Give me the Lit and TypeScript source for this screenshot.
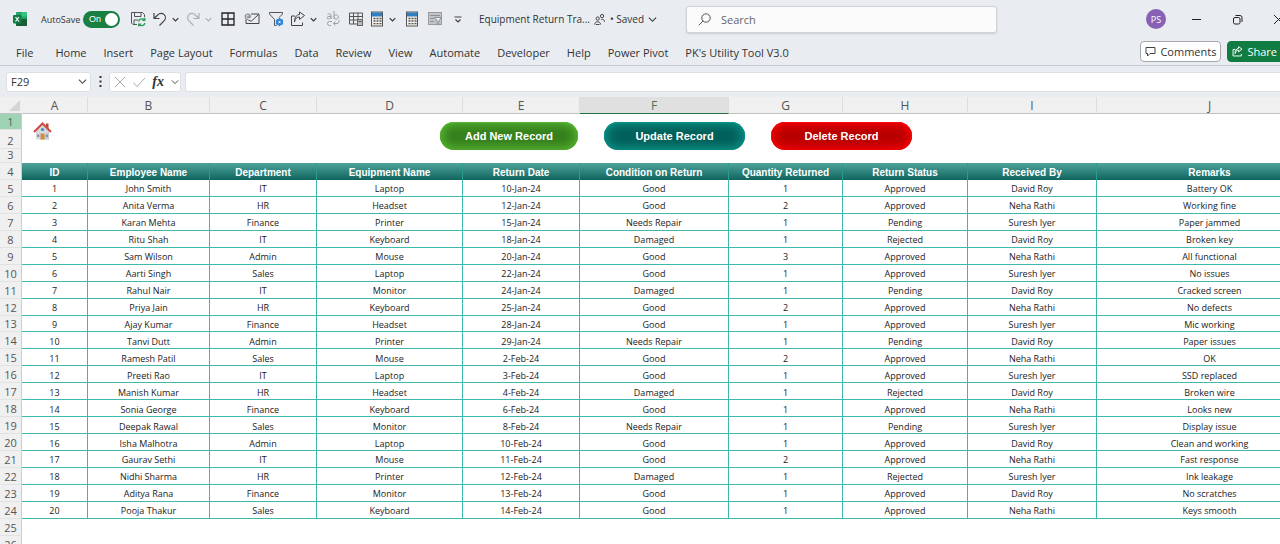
import { LitElement, html, css, svg, nothing } from "lit";
import { customElement, state } from "lit/decorators.js";
import { classMap } from "lit/directives/class-map.js";

const TABS = [
  "File", "Home", "Insert", "Page Layout", "Formulas", "Data", "Review", "View",
  "Automate", "Developer", "Help", "Power Pivot", "PK's Utility Tool V3.0",
];

const LETTERS = ["A", "B", "C", "D", "E", "F", "G", "H", "I", "J"];

const FIELDS = [
  "ID", "Employee Name", "Department", "Equipment Name", "Return Date",
  "Condition on Return", "Quantity Returned", "Return Status", "Received By", "Remarks",
];

const RECORDS = `1|John Smith|IT|Laptop|10-Jan-24|Good|1|Approved|David Roy|Battery OK
2|Anita Verma|HR|Headset|12-Jan-24|Good|2|Approved|Neha Rathi|Working fine
3|Karan Mehta|Finance|Printer|15-Jan-24|Needs Repair|1|Pending|Suresh Iyer|Paper jammed
4|Ritu Shah|IT|Keyboard|18-Jan-24|Damaged|1|Rejected|David Roy|Broken key
5|Sam Wilson|Admin|Mouse|20-Jan-24|Good|3|Approved|Neha Rathi|All functional
6|Aarti Singh|Sales|Laptop|22-Jan-24|Good|1|Approved|Suresh Iyer|No issues
7|Rahul Nair|IT|Monitor|24-Jan-24|Damaged|1|Pending|David Roy|Cracked screen
8|Priya Jain|HR|Keyboard|25-Jan-24|Good|2|Approved|Neha Rathi|No defects
9|Ajay Kumar|Finance|Headset|28-Jan-24|Good|1|Approved|Suresh Iyer|Mic working
10|Tanvi Dutt|Admin|Printer|29-Jan-24|Needs Repair|1|Pending|David Roy|Paper issues
11|Ramesh Patil|Sales|Mouse|2-Feb-24|Good|2|Approved|Neha Rathi|OK
12|Preeti Rao|IT|Laptop|3-Feb-24|Good|1|Approved|Suresh Iyer|SSD replaced
13|Manish Kumar|HR|Headset|4-Feb-24|Damaged|1|Rejected|David Roy|Broken wire
14|Sonia George|Finance|Keyboard|6-Feb-24|Good|1|Approved|Neha Rathi|Looks new
15|Deepak Rawal|Sales|Monitor|8-Feb-24|Needs Repair|1|Pending|Suresh Iyer|Display issue
16|Isha Malhotra|Admin|Laptop|10-Feb-24|Good|1|Approved|David Roy|Clean and working
17|Gaurav Sethi|IT|Mouse|11-Feb-24|Good|2|Approved|Neha Rathi|Fast response
18|Nidhi Sharma|HR|Printer|12-Feb-24|Damaged|1|Rejected|Suresh Iyer|Ink leakage
19|Aditya Rana|Finance|Monitor|13-Feb-24|Good|1|Approved|David Roy|No scratches
20|Pooja Thakur|Sales|Keyboard|14-Feb-24|Good|1|Approved|Neha Rathi|Keys smooth`
  .split("\n")
  .map((line) => line.split("|"));

const calculator = svg`
  <rect x="2.5" y="1" width="11" height="14" fill="#f4f1ea" stroke="#555"/>
  <rect x="3" y="1.5" width="10" height="4" fill="#2f7fc4"/>
  <path d="M4.500 7.500h2M7.500 7.500h2M10.500 7.500h2M4.500 10h2M7.500 10h2M10.500 10h2M4.500 12.700h2M7.500 12.700h2M10.500 12.700h2" stroke="#555" stroke-width="1.3"/>`;

const ICONS: Record<string, unknown> = {
  save: svg`<path d="M14.5 6V3.500L12.500 1.500H1.500v10.500l1.500 1.500h4M4.500 1.500v4h6.500v-4M4 13V9h4" stroke="#555"/>
    <path d="M8.500 10.500a3.500 3.500 0 0 1 6-1.500M14.800 6.800v2.500h-2.500M15 12a3.500 3.500 0 0 1-6 1.500M8.700 15.500v-2.400h2.400" stroke="#2f9e58" stroke-width="1.300"/>`,
  undo: svg`<path d="M2 2v5.500h5.500M2.300 7.200L6 3.700a4.300 4.300 0 0 1 6.200 6L7.500 14.500" stroke="#444" stroke-width="1.200"/>`,
  redo: svg`<path d="M14 2v5.500H8.500M13.700 7.200L10 3.700a4.300 4.300 0 0 0-6.200 6l4.700 4.800" stroke="#aab0b5" stroke-width="1.200"/>`,
  grid: svg`<path d="M2 2h12v12H2zM8 2v12M2 8h12" stroke="#222" stroke-width="1.300"/>`,
  mail: svg`<path d="M7 3h8v9.500H2V8.500M4.500 9.500L7.500 10l7-6.500" stroke="#444"/>
    <path d="M6.500 5.500a2.700 2.700 0 1 0-2 2.800M5 4.300v1.700c0 1 1.500 1 1.500-.500M5 5.500a1 1 0 1 1-1.500-.800" stroke="#555" stroke-width=".8"/>`,
  filter: svg`<path d="M6.500 14.500V8.500L1.500 3V1.500h13V3L11 6.500M6.500 14.500h2" stroke="#555"/>
    <circle cx="11.500" cy="11" r="2.600" stroke="#2f87d8" stroke-width="2"/>
    <path d="M11.500 6.800v8.400M7.900 8.900l7.200 4.200M7.900 13.100l7.200-4.200" stroke="#2f87d8" stroke-width="1.200"/><circle cx="11.500" cy="11" r="1.100" fill="#e9edf1"/>`,
  share: svg`<path d="M5 5H1.500v9.500h11v-3M4.500 11c.5-3.500 2.500-5 5-5V8.500L14.500 4.500 9.500 1v2.500C6 3.800 4.500 7 4.500 11z" stroke="#444"/>`,
  wrap: svg`<path d="M2.500 3.500c1-1 3.500-1 3.500.800V8M6 5.200c-5 0-4.500 2.600-2.500 2.600 1.500 0 2.500-1 2.500-2.600M9 0v8M9 5.500a2.200 2.200 0 1 1 0 1M7 10.500H4.500a2 2 0 0 0 0 4H6M14 9v1.500a2 2 0 0 1-2 2H8.500M10.500 10.500l-2 2 2 2" stroke="#9a9fa4"/>`,
  table: svg`<path d="M10 13H1.500V2h13v5.500M1.500 5.500h13M1.500 9h8M5.500 2v11M10 2v6" stroke="#555"/>
    <rect x="9.500" y="8.500" width="5" height="6" fill="#bbb" stroke="#666"/><path d="M10.500 10.500h3" stroke="#555"/>`,
  calc: calculator,
  funnel: svg`<rect x="1.500" y="1.500" width="13" height="12" fill="#c3c6c9" stroke="#999"/><path d="M3 4.500h10M3 7.500h4M3 10.500h4" stroke="#8d9093"/>
    <path d="M7.500 6.500h7l-2.700 3.500v4l-1.600-1v-3z" fill="#e9edf1" stroke="#8d9093"/>`,
  more: svg`<path d="M4.500 6h7M5.500 8.500L8 11 10.500 8.500" stroke="#444" stroke-width="1.200"/>`,
};

const icon = (name: string) =>
  html`<svg class="icon" viewBox="0 0 16 16" fill="none" aria-hidden="true">${ICONS[name]}</svg>`;

const chevron = html`<svg class="chevron" viewBox="0 0 10 10" fill="none" stroke="currentColor" aria-hidden="true">
  <path d="M1 3l4 4 4-4" /></svg>`;

@customElement("app-titlebar")
class AppTitlebar extends LitElement {
  static styles = css`
    :host { display: block; overflow: hidden; color: #333; font-family: "Open Sans", "Noto Sans", sans-serif; }
    .bar { display: grid; grid-template-columns: 686px minmax(120px, 311px) 1fr; align-items: center; height: 38px; }
    .left { display: flex; align-items: center; min-width: 0; height: 38px; }
    .logo { width: 14px; height: 14px; margin: 0 14px 0 13px; flex: none; }
    .autosave { display: flex; align-items: center; width: 85px; font-size: 9px; white-space: nowrap; }
    .autosave span { width: 42px; }
    .toggle { appearance: none; position: relative; width: 37px; height: 17px; margin: 0; border-radius: 9px; background: #1a7f43; flex: none; }
    .toggle::before { content: "On"; position: absolute; left: 6px; top: 2px; color: #fff; font-size: 9px; line-height: 13px; }
    .toggle::after { content: ""; position: absolute; right: 2px; top: 2px; width: 13px; height: 13px; border-radius: 50%; background: #fff; }
    button { display: flex; align-items: center; justify-content: center; padding: 0; border: 0; background: none; color: #333; font: inherit; flex: none; }
    .tool { width: 24px; height: 24px; }
    .narrow { width: 23px; }
    .split { display: flex; margin-right: 3px; }
    .split .tool { width: 20px; }
    .drop { width: 10px; }
    .dim { color: #aab0b5; }
    .icon { width: 16px; height: 16px; }
    .chevron { width: 7px; height: 7px; stroke-width: 1.6; }
    .doc { display: flex; align-items: center; margin-left: 10px; font-size: 10px; white-space: nowrap; }
    .people { width: 11px; height: 11px; margin: 0 5px 0 4px; }
    .saved { gap: 4px; }
    .saved .chevron { width: 9px; height: 9px; stroke-width: 1.2; }
    .search { display: flex; align-items: center; gap: 10px; height: 27px; box-sizing: border-box; padding: 0 11px;
      border: 1px solid #d0d3d6; border-radius: 3px; background: #fbfbfb; box-shadow: 0 1px 2px #0002; }
    .search svg { width: 13px; height: 13px; flex: none; }
    .search input { flex: 1; min-width: 0; padding: 0; border: 0; outline: 0; background: none; color: #333; font: 11px "Open Sans", sans-serif; }
    .search input::placeholder { color: #666; opacity: 1; }
    .window { display: flex; align-items: center; justify-content: flex-end; margin-right: -4px; }
    .avatar { width: 20px; height: 20px; margin-right: 25px; border-radius: 50%; background: #8661b5; color: #fff; font-size: 9px; }
    .win { width: 11px; height: 20px; margin-right: 30px; }
    .win svg { width: 11px; height: 11px; }
    .win:last-child { margin-right: 0; }
  `;

  private tool(name: string, label: string, extra = "") {
    return html`<button class="tool ${extra}" aria-label=${label}>${icon(name)}</button>`;
  }

  private split(name: string, label: string, dim = false) {
    return html`<div class="split">
      ${this.tool(name, label)}
      <button class=${classMap({ drop: true, dim })} aria-label="${label} options">${chevron}</button>
    </div>`;
  }

  render() {
    return html`<header class="bar">
      <div class="left">
        <svg class="logo" viewBox="0 0 14 14" aria-hidden="true">
          <rect x="3" width="11" height="14" rx="1" fill="#21a366" />
          <path d="M8.500 0H13a1 1 0 0 1 1 1v3.500H8.500z" fill="#33c481" />
          <path d="M3 7h11v6a1 1 0 0 1-1 1H4a1 1 0 0 1-1-1z" fill="#185c37" />
          <rect y="3" width="8.500" height="8.500" rx="1" fill="#107c41" />
          <path d="M2.500 5l3.500 4.500M6 5L2.500 9.500" stroke="#fff" stroke-width="1.200" />
        </svg>
        <label class="autosave"><span>AutoSave</span><input class="toggle" type="checkbox" role="switch" checked /></label>
        ${this.tool("save", "Save")}
        ${this.split("undo", "Undo")}
        ${this.split("redo", "Redo", true)}
        ${this.tool("grid", "Borders")}
        ${this.tool("mail", "Email")}
        ${this.tool("filter", "Filter settings")}
        ${this.split("share", "Export")}
        ${this.tool("wrap", "Wrap text", "narrow")}
        ${this.tool("table", "Pivot table", "narrow")}
        ${this.split("calc", "Calculate")}
        ${this.tool("calc", "Calculate sheet", "narrow")}
        ${this.tool("funnel", "Slicer", "narrow")}
        ${this.tool("more", "Customize toolbar", "narrow")}
        <div class="doc">
          <span>Equipment Return Tra...</span>
          <svg class="people" viewBox="0 0 12 12" fill="none" stroke="#333" aria-hidden="true">
            <circle cx="4" cy="5" r="1.800" /><path d="M.8 11.500c0-4 6.400-4 6.400 0M2 11.500h4" />
            <circle cx="8.800" cy="2.300" r="1.800" /><path d="M8 6c2-.500 3.500.5 3.500 2.500" />
          </svg>
          <button class="saved"><span>• Saved</span>${chevron}</button>
        </div>
      </div>
      <label class="search">
        <svg viewBox="0 0 13 13" fill="none" stroke="#555" aria-hidden="true"><circle cx="8" cy="5" r="4.200" /><path d="M5 8L.8 12.200" /></svg>
        <input type="search" placeholder="Search" aria-label="Search" />
      </label>
      <div class="window">
        <button class="avatar" aria-label="Account">PS</button>
        <button class="win" aria-label="Minimize"><svg viewBox="0 0 11 11"><path d="M1 5.500h9" stroke="#222" /></svg></button>
        <button class="win" aria-label="Restore"><svg viewBox="0 0 11 11" fill="none" stroke="#222"><rect x="1.500" y="3.500" width="6.500" height="6.500" rx="1.500" /><path d="M3.500 1.500H8a2 2 0 0 1 2 2V8" /></svg></button>
        <button class="win" aria-label="Close"><svg viewBox="0 0 11 11"><path d="M1 1l9 9M10 1l-9 9" stroke="#222" /></svg></button>
      </div>
    </header>`;
  }
}

@customElement("app-ribbon")
class AppRibbon extends LitElement {
  static styles = css`
    :host { display: block; overflow: hidden; font-family: "Open Sans", "Noto Sans", sans-serif; }
    .ribbon { display: flex; align-items: center; height: 27px; border-bottom: 1px solid #c4cacf; box-shadow: 0 1px 2px #0001; }
    .tabs { display: flex; gap: 17px; padding: 2px 0 0 16px; white-space: nowrap; }
    .tab { color: #333; font-size: 11px; line-height: 16px; text-decoration: none; }
    .tab:first-child { margin-right: 5px; }
    .actions { display: flex; gap: 6px; margin: 0 -16px 0 auto; }
    .action { display: flex; align-items: center; gap: 4px; height: 21px; box-sizing: border-box; padding: 0 4px;
      border: 1px solid #a5a9ad; border-radius: 4px; background: #fff; color: #333; font: 11px "Open Sans", sans-serif; white-space: nowrap; }
    .action svg { width: 11px; height: 11px; }
    .primary { padding-right: 18px; border-color: #107c41; background: #107c41; color: #fff; }
  `;

  render() {
    return html`<div class="ribbon">
      <nav class="tabs" aria-label="Ribbon">${TABS.map((tab) => html`<a class="tab" href="#">${tab}</a>`)}</nav>
      <div class="actions">
        <button class="action">
          <svg viewBox="0 0 11 11" fill="none" stroke="#444" aria-hidden="true"><path d="M1 1.500h9v6H5L2.500 10V7.500H1z" /></svg>Comments
        </button>
        <button class="action primary">
          <svg viewBox="0 0 16 16" fill="none" stroke="#fff" stroke-width="1.400" aria-hidden="true"><path d="M5 5H1.500v9.500h12v-3M4.500 11c.5-3.500 2.500-5 5-5V8.500L14.500 4.500 9.500 1v2.500C6 3.800 4.500 7 4.500 11z" /></svg>Share
        </button>
      </div>
    </div>`;
  }
}

@customElement("app-formula-bar")
class AppFormulaBar extends LitElement {
  static properties = { cell: {} };
  declare cell: string;

  static styles = css`
    :host { display: block; }
    .bar { display: flex; align-items: center; height: 31px; padding-left: 6px; }
    .box { display: flex; align-items: center; height: 20px; box-sizing: border-box; border: 1px solid #dde0e3; border-radius: 3px; background: #fff; }
    .name { width: 85px; padding: 0 3px 0 4px; }
    input { flex: 1; min-width: 0; padding: 0; border: 0; outline: 0; background: none; color: #333; font: 11px "Open Sans", sans-serif; }
    button { display: flex; align-items: center; justify-content: center; padding: 0; border: 0; background: none; color: #444; }
    .chevron { width: 9px; height: 9px; stroke-width: 1.2; }
    .dots { width: 3px; height: 11px; margin: 0 7px 0 8px; }
    .tools { width: 72px; justify-content: space-between; padding: 0 1px 0 4px; color: #777; }
    .tools svg { width: 12px; height: 12px; }
    .tools .chevron { width: 8px; height: 8px; }
    .fx { font: italic bold 14px/16px "Liberation Serif", serif; color: #333; }
    .formula { flex: 1; margin-left: 4px; padding: 0 6px; border-right: 0; border-radius: 3px 0 0 3px; }
  `;

  render() {
    return html`<div class="bar">
      <div class="box name">
        <input aria-label="Name box" .value=${this.cell} />
        <button aria-label="Named ranges">${chevron}</button>
      </div>
      <svg class="dots" viewBox="0 0 3 11" fill="#333" aria-hidden="true"><path d="M.5 0h2v2h-2zM.5 4.500h2v2h-2zM.5 9h2v2h-2z" /></svg>
      <div class="box tools">
        <button aria-label="Cancel"><svg viewBox="0 0 12 12" stroke="#aaa"><path d="M1 1l10 10M11 1L1 11" /></svg></button>
        <button aria-label="Enter"><svg viewBox="0 0 12 12" fill="none" stroke="#aaa"><path d="M0 6.500l4 4 8-8.500" /></svg></button>
        <button class="fx" aria-label="Insert function">fx</button>
        <button aria-label="Functions">${chevron}</button>
      </div>
      <div class="box formula"><input aria-label="Formula" /></div>
    </div>`;
  }
}

@customElement("app-sheet")
class AppSheet extends LitElement {
  static styles = css`
    :host { display: block; overflow: hidden; background: #fff; }
    .sheet { width: 1323px; table-layout: fixed; border-collapse: separate; border-spacing: 0; color: #222; font: 9px/13px "Open Sans", sans-serif; }
    .gutter { width: 22px; }
    .a { width: 66px; } .b { width: 122px; } .c { width: 107px; } .d { width: 146px; } .e { width: 117px; }
    .f { width: 149px; } .g { width: 114px; } .h { width: 125px; } .i { width: 129px; } .j { width: 226px; }
    th, td { padding: 0; box-sizing: border-box; text-align: center; vertical-align: middle; white-space: nowrap; }
    .letter, .corner { height: 17px; border-right: 1px solid #dcdcdc; border-bottom: 1px solid #c2c2c2; background: #f0f0f0;
      color: #555; font: 12px/15px "Open Sans", sans-serif; }
    .corner { vertical-align: bottom; border-right-color: #f0f0f0; }
    .corner svg { display: block; width: 11px; height: 11px; margin: 0 1px 2px auto; }
    .letter.active { border-bottom-color: #217346; background: #e0e0e0; color: #44785c; }
    .number { padding-bottom: 1px; border-right: 1px solid #ccc; border-bottom: 1px solid #e2e2e2; background: #f0f0f0; color: #555; font: 11px/12px "Open Sans", sans-serif; vertical-align: bottom; }
    .number.active { background: #9fd3b6; color: #3d6b50; }
    .r1 { height: 16px; } .r2 { height: 19px; } .r3 { height: 14px; } .r4 { height: 17px; } .blank { height: 17px; }
    .canvas { vertical-align: top; }
    .controls { display: flex; align-items: flex-start; padding: 8px 0 0 11px; }
    .home { width: 19px; height: 18px; padding: 0; border: 0; background: none; }
    .home svg { display: block; width: 19px; height: 18px; }
    .actions { display: flex; gap: 26px; margin-left: 388px; }
    .pill { width: 141px; height: 28px; padding: 0; border: 0; border-radius: 14px; color: #fff; font: bold 11px/28px "Liberation Sans", sans-serif; }
    .add { width: 138px; background: #36801d; box-shadow: inset 0 0 10px 3px #55b330, inset 0 1px 1px #66c845; }
    .update { background: #03605a; box-shadow: inset 0 0 10px 3px #089286, inset 0 1px 1px #10a89b; }
    .delete { background: #b80000; box-shadow: inset 0 0 10px 3px #fa0000, inset 0 1px 1px #ff2020; }
    .field { padding-top: 1px; border-right: 1px solid #2c9a90; background: linear-gradient(#4fa39b, #0f655e); color: #fff; font: bold 10px/15px "Liberation Sans", sans-serif; }
    .records { height: 339px; }
    .cell { padding-top: 2px; border-right: 1px solid #3fb8ae; border-bottom: 1px solid #3fb8ae; }
  `;

  @state() private activeColumn = "F";

  private number(n: number, active = false) {
    return html`<th scope="row" class=${classMap({ number: true, active })}>${n}</th>`;
  }

  render() {
    return html`<table class="sheet">
      <colgroup><col class="gutter" />${LETTERS.map((l) => html`<col class=${l.toLowerCase()} />`)}</colgroup>
      <thead>
        <tr>
          <td class="corner"><svg viewBox="0 0 11 11" aria-hidden="true"><path d="M11 0v11H0z" fill="#d5d5d5" /></svg></td>
          ${LETTERS.map((l) => html`<th scope="col" class=${classMap({ letter: true, active: l === this.activeColumn })}>${l}</th>`)}
        </tr>
      </thead>
      <tbody>
        <tr class="r1">
          ${this.number(1, true)}
          <td class="canvas" colspan="10" rowspan="3">
            <div class="controls">
              <button class="home" aria-label="Home">
                <svg viewBox="0 0 19 18" aria-hidden="true">
                  <path d="M13 1.500h2.500V7H13z" fill="#b9483c" />
                  <path d="M3 8.500L9.500 2l6.500 6.500V17.500H3z" fill="#d5d9e0" />
                  <path d="M9 17.500H16V8.500z" fill="#b6bec9" opacity=".5" />
                  <path d="M1 10L9.500 1.500 18 10" fill="none" stroke="#d04a3f" stroke-width="2" />
                  <circle cx="9.500" cy="7.500" r="1.600" fill="#3b8fb8" />
                  <path d="M7.500 11.500h4v6h-4z" fill="#d98a35" /><path d="M4 12.500h2.300v2.500H4zM12.700 12.500H15v2.500h-2.300z" fill="#8195b5" />
                </svg>
              </button>
              <div class="actions">
                <button class="pill add">Add New Record</button>
                <button class="pill update">Update Record</button>
                <button class="pill delete">Delete Record</button>
              </div>
            </div>
          </td>
        </tr>
        <tr class="r2">${this.number(2)}</tr>
        <tr class="r3">${this.number(3)}</tr>
        <tr class="r4">${this.number(4)}${FIELDS.map((f) => html`<th scope="col" class="field">${f}</th>`)}</tr>
      </tbody>
      <tbody class="records">
        ${RECORDS.map((r, i) => html`<tr>${this.number(i + 5)}${r.map((v) => html`<td class="cell">${v}</td>`)}</tr>`)}
      </tbody>
      <tbody>
        ${[25, 26].map((n) => html`<tr class="blank">${this.number(n)}<td colspan="10">${nothing}</td></tr>`)}
      </tbody>
    </table>`;
  }
}

@customElement("app-root")
class AppRoot extends LitElement {
  static styles = css`
    :host { display: block; height: 100vh; overflow: hidden; background: #e9edf1; }
    .page { display: flex; flex-direction: column; height: 100%; }
    .grow { flex: 1; min-height: 0; }
  `;

  render() {
    return html`<div class="page">
      <app-titlebar></app-titlebar>
      <app-ribbon></app-ribbon>
      <app-formula-bar .cell=${"F29"}></app-formula-bar>
      <app-sheet class="grow"></app-sheet>
    </div>`;
  }
}
